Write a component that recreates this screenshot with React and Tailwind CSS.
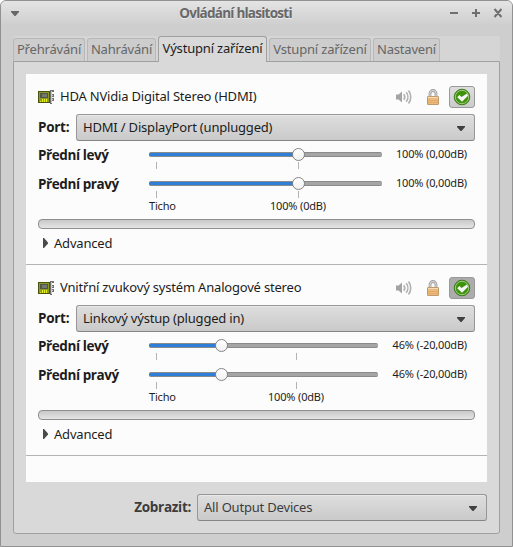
import React from 'react';
import clsx from 'clsx';

const tabs = [
    { label: 'Přehrávání', className: 'w-[72px]' },
    { label: 'Nahrávání', className: 'w-[69px]' },
    { label: 'Výstupní zařízení', className: 'w-[109px]', active: true },
    { label: 'Vstupní zařízení', className: 'w-[102px]' },
    { label: 'Nastavení', className: 'w-[67px]' },
];

const devices = [
    {
        name: 'HDA NVidia Digital Stereo (HDMI)',
        port: 'HDMI / DisplayPort (unplugged)',
        trackWidth: 233,
        knob: 149.5,
        fullMark: 149,
        value: '100% (0,00dB)',
        isDefault: false,
    },
    {
        name: 'Vnitřní zvukový systém Analogové stereo',
        port: 'Linkový výstup (plugged in)',
        trackWidth: 229,
        knob: 72.5,
        fullMark: 147,
        value: '46% (-20,00dB)',
        isDefault: true,
    },
];

const Label = ({ bold, small, className, children }) => (
    <span
        className={clsx(
            'block shrink-0 leading-[18px] whitespace-nowrap',
            small && 'text-[11px] tracking-[-0.17px]',
            bold && "font-['Open_Sans',sans-serif] text-[13.5px] font-bold",
            !small && !bold && 'text-[13px] tracking-[-0.19px]',
            className
        )}
    >
        {children}
    </span>
);

const CardIcon = () => (
    <svg width="17" height="16" viewBox="0 0 17 16" shapeRendering="crispEdges">
        <rect x="0" y="2" width="12" height="12" fill="#4a5410" />
        <rect x="1" y="3" width="10" height="10" fill="#8d9a26" />
        <rect x="2" y="4" width="8" height="5" fill="#50564a" />
        <rect x="4" y="5" width="5" height="3" fill="#737971" />
        <path d="M4 10h1v3H4zM6 10h1v3H6zM8 10h1v3H8zM2 12h1v1H2z" fill="#e8f020" />
        <path d="M12 1h4v2h-2v2h2v3h-2v1h2v3h-2v3h-2z" fill="#707070" />
        <path d="M13 2h1v12h-1zM14 6h1v1h-1zM14 10h1v1h-1z" fill="#c9c9c9" />
    </svg>
);

const SpeakerIcon = () => (
    <svg width="16" height="16" viewBox="0 0 16 16" fill="none" stroke="#b0b0b0" strokeWidth="1.6">
        <path d="M0 5.500h2.500L6 2.500v11l-3.500-3H0z" fill="#a4a4a4" stroke="none" />
        <path d="M7.800 5.200c1.200 1.700 1.200 3.900 0 5.600M10.200 3.300c2.200 2.700 2.200 6.700 0 9.400M12.500 1.500c3 3.800 3 9.200 0 13" />
    </svg>
);

const LockIcon = () => (
    <svg width="14" height="16" viewBox="0 0 14 16" fill="none">
        <path d="M4 8V4.500a3 3 0 0 1 6 0V8" stroke="#a0a0a0" strokeWidth="2.800" />
        <path d="M4 8V4.500a3 3 0 0 1 6 0V8" stroke="#dcdcdc" strokeWidth="1" />
        <rect x="1.500" y="7.500" width="11" height="8" rx="0.500" fill="#ecba7c" stroke="#c09a6c" />
        <path d="M2 8.500h10" stroke="#f6dcb6" />
        <path d="M2 11.500h10M2 13.500h10" stroke="#e2ab65" />
    </svg>
);

const CheckIcon = () => (
    <svg width="18" height="18" viewBox="0 0 18 18">
        <circle cx="9" cy="9" r="7.800" fill="#3f930c" stroke="#39751a" strokeWidth="0.900" />
        <circle cx="9" cy="9" r="6.700" fill="none" stroke="#a9d28f" strokeWidth="0.900" />
        <path d="M4.200 9.300L6.500 7l2 2L14 5.600l1 2.200-6 6z" fill="#f5f5f5" />
    </svg>
);

const Arrow = ({ className }) => (
    <svg className={className} width="8" height="5" viewBox="0 0 8 5">
        <path d="M0 0h8v1L4.500 5h-1L0 1z" fill="currentColor" />
    </svg>
);

const Combo = ({ className, children }) => (
    <div
        className={clsx(
            'flex h-[27px] items-center justify-between rounded-[3px] border border-[#979797] border-b-[#858585] bg-linear-to-b from-[#dedede] to-[#cacaca] pr-[9px] pl-1.5 shadow-[inset_0_1px_0_#e8e8e8]',
            className
        )}
    >
        <Label className="-mt-px">{children}</Label>
        <Arrow className="mt-0.5 text-[#404040]" />
    </div>
);

const Slider = ({ name, device }) => (
    <div className="flex h-[29px] justify-between">
        <div className="w-[111px] pt-[5px]">
            <Label bold className="tracking-[-0.42px]">{name}</Label>
        </div>
        <div className="relative pt-[11px]" style={{ width: device.trackWidth }}>
            <div className="h-[5px] overflow-hidden rounded-[2px] border-y border-[#8b8b8b] bg-[#a5a5a5]">
                <div
                    className="-mt-px h-[5px] border-y border-[#2861a8] bg-[#2f7fd8]"
                    style={{ width: device.knob }}
                ></div>
            </div>
            <div className="mt-[5px] flex h-[7px] pl-[7px]">
                <div className="w-px bg-[#b3b3b3]"></div>
                <div className="w-px bg-[#b3b3b3]" style={{ marginLeft: device.fullMark - 8 }}></div>
            </div>
            <div
                className="absolute top-[7px] size-[13px] rounded-full border border-[#858585] bg-linear-to-b from-white to-[#f2f2f2]"
                style={{ left: device.knob - 6.5 }}
            ></div>
        </div>
        <div className="flex grow justify-end pt-1 pr-2">
            <Label small>{device.value}</Label>
        </div>
    </div>
);

const Device = ({ device }) => (
    <div className="h-[191px] border-b border-[#b3b3b3] px-3 pt-3">
        <div className="flex h-[22px] items-center">
            <CardIcon />
            <Label className="-mt-0.5 ml-[5px]">{device.name}</Label>
            <div className="ml-auto flex items-center">
                <SpeakerIcon />
                <div className="mr-[9px] ml-3.5">
                    <LockIcon />
                </div>
                <div
                    className={clsx(
                        'flex h-[22px] w-[26px] items-center justify-center rounded-[3px] border border-[#999]',
                        device.isDefault ? 'bg-[#acacac]' : 'bg-linear-to-b from-[#dedede] to-[#cbcbcb]'
                    )}
                >
                    <CheckIcon />
                </div>
            </div>
        </div>
        <div className="mt-1.5 flex items-center">
            <Label bold className="-mt-px w-8 tracking-[-0.3px]">Port:</Label>
            <Combo className="ml-1.5 grow">{device.port}</Combo>
        </div>
        <Slider name="Přední levý" device={device} />
        <Slider name="Přední pravý" device={device} />
        <div className="flex h-3.5 items-center pl-[111px]">
            <Label small className="w-[27px]">Ticho</Label>
            <Label small className={device.isDefault ? 'ml-[92px]' : 'ml-[94px]'}>
                100% (0dB)
            </Label>
        </div>
        <div className="mt-1.5 h-2.5 rounded-[4px] border border-[#8f8f8f] bg-linear-to-b from-[#c8c8c8] to-[#e5e5e5]"></div>
        <div className="flex h-7 items-center pl-[5px]">
            <svg width="5" height="10" viewBox="0 0 5 10">
                <path d="M0 0h1l4 4.500v1L1 10H0z" fill="#4a4a4a" />
            </svg>
            <Label className="ml-1.5">Advanced</Label>
        </div>
    </div>
);

const App = () => {
    return (
        <div className="h-[547px] w-[513px] bg-white font-['Noto_Sans',sans-serif] text-[#1c1c1c]">
            <div className="flex h-full flex-col rounded-t-[6px] border border-[#919191] bg-[#cecece] px-3">
                <div className="-mx-3 flex h-[35px] items-start rounded-t-[5px] bg-linear-to-b from-[#e4e4e4] to-[#cecece] to-70% px-2.5 pt-[3px] text-[#686868]">
                    <Arrow className="mt-[7px]" />
                    <div className="flex w-[433px] justify-center">
                        <Label bold className="tracking-[-0.75px] [text-shadow:0_1px_0_#ececec]">Ovládání hlasitosti</Label>
                    </div>
                    <svg className="mt-1 -ml-1" width="54" height="10" viewBox="0 0 54 10" stroke="#6f6f6f" strokeWidth="2" fill="none">
                        <path d="M2 5h8M24 5h8M28 1v8M46.500 1l7 8M53.500 1l-7 8" />
                    </svg>
                </div>
                <div className="flex h-[25px] items-end gap-0.5 rounded-t-[3px] bg-[#d5d5d5]">
                    {tabs.map((tab) => (
                        <div
                            key={tab.label}
                            className={clsx(
                                'flex justify-center rounded-t-[3px] border border-b-0',
                                tab.className,
                                tab.active
                                    ? 'relative -mb-px h-[26px] border-[#a0a0a0] bg-[#d9d9d9] pt-0.5'
                                    : 'h-[23px] border-[#b8b8b8] bg-[#cdcdcd] pt-px text-[#666]'
                            )}
                        >
                            <Label>{tab.label}</Label>
                        </div>
                    ))}
                </div>
                <div className="h-[473px] w-[487px] rounded-b-[3px] border border-[#a0a0a0] bg-[#d9d9d9] px-3 pt-3">
                    <div className="h-[408px] bg-[#fcfcfc]">
                        {devices.map((device) => (
                            <Device key={device.name} device={device} />
                        ))}
                    </div>
                    <div className="mt-3 flex items-center justify-end text-[#3c3c3c]">
                        <Label bold className="-mt-px tracking-[-0.3px]">Zobrazit:</Label>
                        <Combo className="ml-1.5 w-[290px]">All Output Devices</Combo>
                    </div>
                </div>
            </div>
        </div>
    );
};

export default App;
